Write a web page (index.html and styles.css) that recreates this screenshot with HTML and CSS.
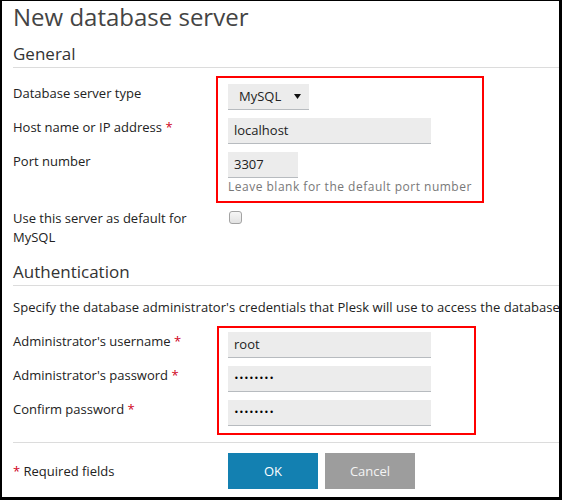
FILE: index.html
```html
<!DOCTYPE html>
<html>
<head>
<meta charset="utf-8">
<link rel="stylesheet" href="styles.css">
</head>
<body>
<div class="frame">
  <h1 class="title">New database server</h1>

  <h2 class="sec-title">General</h2>
  <div class="fields fields-general">
    <div class="annot annot-general"></div>
    <div class="row">
      <div class="label">Database server type</div>
      <div class="ctl">
        <div class="select">MySQL
          <svg class="caret" width="7" height="5" viewBox="0 0 7 5"><path d="M0 0H7L3.5 5Z" fill="#111"/></svg>
        </div>
      </div>
    </div>
    <div class="row">
      <div class="label">Host name or IP address <span class="req">*</span></div>
      <div class="ctl"><div class="input wide">localhost</div></div>
    </div>
    <div class="row">
      <div class="label">Port number</div>
      <div class="ctl">
        <div class="input short">3307</div>
        <div class="hint">Leave blank for the default port number</div>
      </div>
    </div>
    <div class="row row-check">
      <div class="label label-multi">Use this server as default for MySQL</div>
      <div class="ctl"><div class="checkbox"></div></div>
    </div>
  </div>

  <h2 class="sec-title sec-auth">Authentication</h2>
  <p class="desc">Specify the database administrator's credentials that Plesk will use to access the database server.</p>
  <div class="fields fields-auth">
    <div class="annot annot-auth"></div>
    <div class="row">
      <div class="label">Administrator's username <span class="req">*</span></div>
      <div class="ctl"><div class="input wide">root</div></div>
    </div>
    <div class="row">
      <div class="label">Administrator's password <span class="req">*</span></div>
      <div class="ctl"><div class="input wide dots">••••••••</div></div>
    </div>
    <div class="row">
      <div class="label">Confirm password <span class="req">*</span></div>
      <div class="ctl"><div class="input wide dots">••••••••</div></div>
    </div>
  </div>

  <div class="footer">
    <div class="required"><span class="req">*</span> Required fields</div>
    <div class="buttons">
      <div class="btn btn-ok">OK</div>
      <div class="btn btn-cancel">Cancel</div>
    </div>
  </div>
</div>
</body>
</html>
```

FILE: styles.css
```css
* { box-sizing: border-box; }
html, body { margin: 0; padding: 0; background: #fff; }
body { font-family: "Open Sans", "Liberation Sans", sans-serif; color: #222; }

.frame {
  width: 562px;
  height: 500px;
  border-style: solid;
  border-color: #000;
  border-width: 1px 3px 3px 2px;
  padding-left: 11px;
  overflow: hidden;
  background: #fff;
}

.title {
  margin: 0 0 11px 0;
  font-size: 24px;
  line-height: 31px;
  font-weight: 400;
  color: #444;
  white-space: nowrap;
}

.sec-title {
  margin: 0;
  font-size: 17px;
  line-height: 22px;
  font-weight: 400;
  color: #333;
  padding-bottom: 2px;
  border-bottom: 1px solid #dcdcdc;
}

.sec-auth { margin-top: 14px; }

.fields {
  position: relative;
  margin-top: 16px;
}

.annot {
  position: absolute;
  border: 2px solid #f00;
  pointer-events: none;
}
.annot-general { left: 203px; top: -8px; width: 268px; height: 127px; }
.annot-auth { left: 204px; top: -6px; width: 259px; height: 109px; }

.row {
  display: flex;
  margin-bottom: 8px;
}
.row:last-child { margin-bottom: 0; }

.label {
  flex: 0 0 215px;
  padding-right: 12px;
  font-size: 13px;
  line-height: 18px;
  color: #222;
}
.label-multi { line-height: 19px; }

.req { color: #d0021b; }

.ctl {
  display: flex;
  flex-direction: column;
}

.select {
  width: 81px;
  height: 26px;
  background: #ececec;
  border-bottom: 1px solid #b7bbbf;
  font-size: 13px;
  line-height: 25px;
  padding-left: 11px;
  display: flex;
  align-items: center;
  color: #222;
}
.caret { margin-left: auto; margin-right: 8px; }

.input {
  height: 26px;
  background: #ececec;
  border-bottom: 1px solid #b7bbbf;
  font-size: 13px;
  line-height: 25px;
  padding-left: 6px;
  color: #222;
}
.wide { width: 203px; }
.short { width: 70px; }

.dots {
  font-family: "DejaVu Sans", sans-serif;
  font-size: 8px;
  letter-spacing: 0.3px;
  padding-left: 6px;
  color: #000;
}

.hint {
  font-size: 12px;
  letter-spacing: 0.5px;
  line-height: 16px;
  margin-top: 1px;
  color: #787878;
  white-space: nowrap;
}

.row-check { margin-top: 14px; }
.checkbox {
  width: 13px;
  height: 13px;
  margin-top: 2px;
  margin-left: 1px;
  border: 1px solid #a3a3a3;
  border-radius: 3px;
  background: linear-gradient(#f6f6f6, #e2e2e2);
}

.desc {
  margin: 12px 0 0 0;
  font-size: 13px;
  line-height: 18px;
  letter-spacing: 0.05px;
  color: #222;
  white-space: nowrap;
}

.footer {
  display: flex;
  align-items: center;
  margin-top: 16px;
  border-top: 1px solid #dcdcdc;
  padding-top: 10px;
}
.required {
  flex: 0 0 215px;
  font-size: 13px;
  line-height: 18px;
}
.buttons {
  display: flex;
  gap: 7px;
}
.btn {
  width: 90px;
  height: 36px;
  font-size: 13px;
  line-height: 36px;
  text-align: center;
}
.btn-ok { background: #1380b1; color: #fff; }
.btn-cancel { background: #9d9d9d; color: #f4f4f4; }
```
